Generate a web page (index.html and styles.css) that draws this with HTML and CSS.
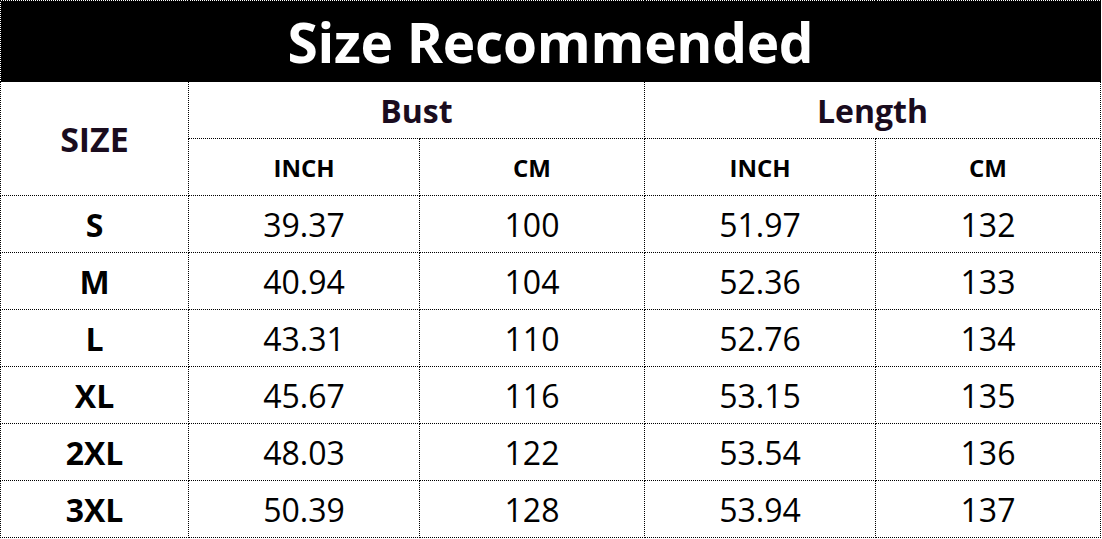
FILE: index.html
```html
<!DOCTYPE html>
<html>
<head>
<meta charset="utf-8">
<link rel="stylesheet" href="styles.css">
</head>
<body>
<table class="chart">
  <colgroup>
    <col class="c-size">
    <col class="c-a">
    <col class="c-b">
    <col class="c-a">
    <col class="c-b">
  </colgroup>
  <tr class="title-row"><th colspan="5" class="title">Size Recommended</th></tr>
  <tr class="head-row">
    <th rowspan="2" class="h-size">SIZE</th>
    <th colspan="2" class="h-group">Bust</th>
    <th colspan="2" class="h-group">Length</th>
  </tr>
  <tr class="head-row">
    <th class="h-unit">INCH</th>
    <th class="h-unit">CM</th>
    <th class="h-unit">INCH</th>
    <th class="h-unit">CM</th>
  </tr>
  <tr class="data-row"><th class="size">S</th><td>39.37</td><td>100</td><td>51.97</td><td>132</td></tr>
  <tr class="data-row"><th class="size">M</th><td>40.94</td><td>104</td><td>52.36</td><td>133</td></tr>
  <tr class="data-row"><th class="size">L</th><td>43.31</td><td>110</td><td>52.76</td><td>134</td></tr>
  <tr class="data-row"><th class="size">XL</th><td>45.67</td><td>116</td><td>53.15</td><td>135</td></tr>
  <tr class="data-row"><th class="size">2XL</th><td>48.03</td><td>122</td><td>53.54</td><td>136</td></tr>
  <tr class="data-row"><th class="size">3XL</th><td>50.39</td><td>128</td><td>53.94</td><td>137</td></tr>
</table>
</body>
</html>
```
FILE: styles.css
```css
html, body {
  margin: 0;
  padding: 0;
  background: #fff;
}
body {
  font-family: "Open Sans", "Noto Sans", sans-serif;
  color: #000;
}
.chart {
  border-collapse: collapse;
  table-layout: fixed;
  width: 1101px;
}
.c-size { width: 188px; }
.c-a { width: 231px; }
.c-b { width: 225px; }
.chart th, .chart td {
  border: 1px dotted #000;
  padding: 0;
  text-align: center;
  vertical-align: middle;
}
.title-row th {
  height: 80px;
}
.title {
  background: #000;
  color: #fff;
  font-size: 55px;
  font-weight: 700;
  line-height: 1;
  letter-spacing: -0.3px;
}
.head-row th {
  height: 56px;
  color: #1a0c1e;
}
.h-size {
  font-size: 34px;
  font-weight: 700;
}
.h-group {
  font-size: 32px;
  font-weight: 700;
}
.h-unit {
  font-size: 24px;
  font-weight: 700;
  color: #000 !important;
}
.data-row th, .data-row td {
  height: 56px;
}
.size {
  font-size: 32px;
  font-weight: 700;
}
.data-row td {
  font-size: 32px;
  font-weight: 400;
}
```
